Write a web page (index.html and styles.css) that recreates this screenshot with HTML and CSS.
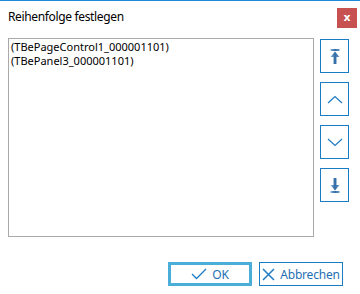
FILE: index.html
```html
<!DOCTYPE html>
<html lang="de">
<head>
  <meta charset="UTF-8" />
  <title>Reihenfolge festlegen</title>
  <link rel="stylesheet" href="styles.css">
</head>
<body>
  <div class="dialog">
    <header class="titlebar">
      <span class="title">Reihenfolge festlegen</span>
      <button class="close">x</button>
    </header>

    <div class="content">
      <div class="list">
        <div class="item">(TBePageControl1_000001101)</div>
        <div class="item">(TBePanel3_000001101)</div>
      </div>

      <div class="side">
        <button class="side-btn" title="Nach oben">
          <svg width="10" height="15" viewBox="0 0 10 15">
            <defs>
              <linearGradient id="g1" x1="0" y1="0" x2="1" y2="0">
                <stop offset="0" stop-color="#8fb6da"/>
                <stop offset="0.5" stop-color="#2f6aa6"/>
                <stop offset="1" stop-color="#6e9dc9"/>
              </linearGradient>
            </defs>
            <rect x="0.5" y="0" width="9" height="2" fill="url(#g1)"/>
            <path d="M5 2.5 L9.5 8 L6.5 8 L6.5 15 L3.5 15 L3.5 8 L0.5 8 Z" fill="url(#g1)"/>
          </svg>
        </button>
        <button class="side-btn" title="Hoch">
          <svg width="16" height="9" viewBox="0 0 16 9">
            <path d="M1 8 L8 1.5 L15 8" fill="none" stroke="#1f7cc4" stroke-width="1.2"/>
          </svg>
        </button>
        <button class="side-btn" title="Runter">
          <svg width="16" height="9" viewBox="0 0 16 9">
            <path d="M1 1 L8 7.5 L15 1" fill="none" stroke="#1f7cc4" stroke-width="1.2"/>
          </svg>
        </button>
        <button class="side-btn" title="Nach unten">
          <svg width="10" height="15" viewBox="0 0 10 15">
            <defs>
              <linearGradient id="g2" x1="0" y1="0" x2="1" y2="0">
                <stop offset="0" stop-color="#8fb6da"/>
                <stop offset="0.5" stop-color="#2f6aa6"/>
                <stop offset="1" stop-color="#6e9dc9"/>
              </linearGradient>
            </defs>
            <path d="M3.5 0 L6.5 0 L6.5 7 L9.5 7 L5 12.5 L0.5 7 L3.5 7 Z" fill="url(#g2)"/>
            <rect x="0.5" y="13" width="9" height="2" fill="url(#g2)"/>
          </svg>
        </button>
      </div>
    </div>

    <footer class="footer">
      <button class="btn btn-default">
        <svg width="16" height="12" viewBox="0 0 16 12">
          <path d="M1 6 L5.5 10.5 L15 1" fill="none" stroke="#1f7cc4" stroke-width="1.3"/>
        </svg>
        <span>OK</span>
      </button>
      <button class="btn">
        <svg width="13" height="13" viewBox="0 0 13 13">
          <path d="M1 1 L12 12 M12 1 L1 12" fill="none" stroke="#1f7cc4" stroke-width="1.5"/>
        </svg>
        <span>Abbrechen</span>
      </button>
    </footer>
  </div>
</body>
</html>
```

FILE: styles.css
```css
* { margin:0; padding:0; box-sizing:border-box; }
body { background:#fff; font-family:"Noto Sans","Liberation Sans",sans-serif; }

.dialog { width:360px; height:294px; border-top:1px solid #1e88d8; background:#fff; }

/* Titelzeile */
.titlebar { height:37px; display:flex; justify-content:space-between; align-items:flex-start; padding:0 3px 0 8px; }
.title { font-size:12px; letter-spacing:-0.35px; color:#000; margin-top:7px; }
.close { width:20px; height:20px; margin-top:7px; border:none; background:#c75050; color:#fff; font-size:11px; font-weight:bold; line-height:18px; font-family:"DejaVu Sans",sans-serif; }

/* Liste + Pfeiltasten */
.content { display:flex; padding-left:8px; }
.list { width:306px; height:199px; border:1px solid #a9a9a9; padding:1px 2px; }
.item { font-size:11px; line-height:14px; color:#000; }

.side { display:flex; flex-direction:column; gap:9px; margin-left:6px; padding-top:1px; }
.side-btn { width:29px; height:34px; border:1px solid #1a7cc2; background:#fff; display:flex; align-items:center; justify-content:center; }

/* Untere Buttons */
.footer { display:flex; justify-content:flex-end; gap:7px; padding:25px 17px 0 0; }
.btn { height:24px; width:84px; border:1px solid #1a7cc2; background:#fff; color:#1f6fb2; font-size:12px; letter-spacing:-0.2px; font-family:inherit; display:flex; align-items:center; justify-content:center; gap:5px; }
.btn-default { width:84px; border:3px solid #4aaed8; }
```
